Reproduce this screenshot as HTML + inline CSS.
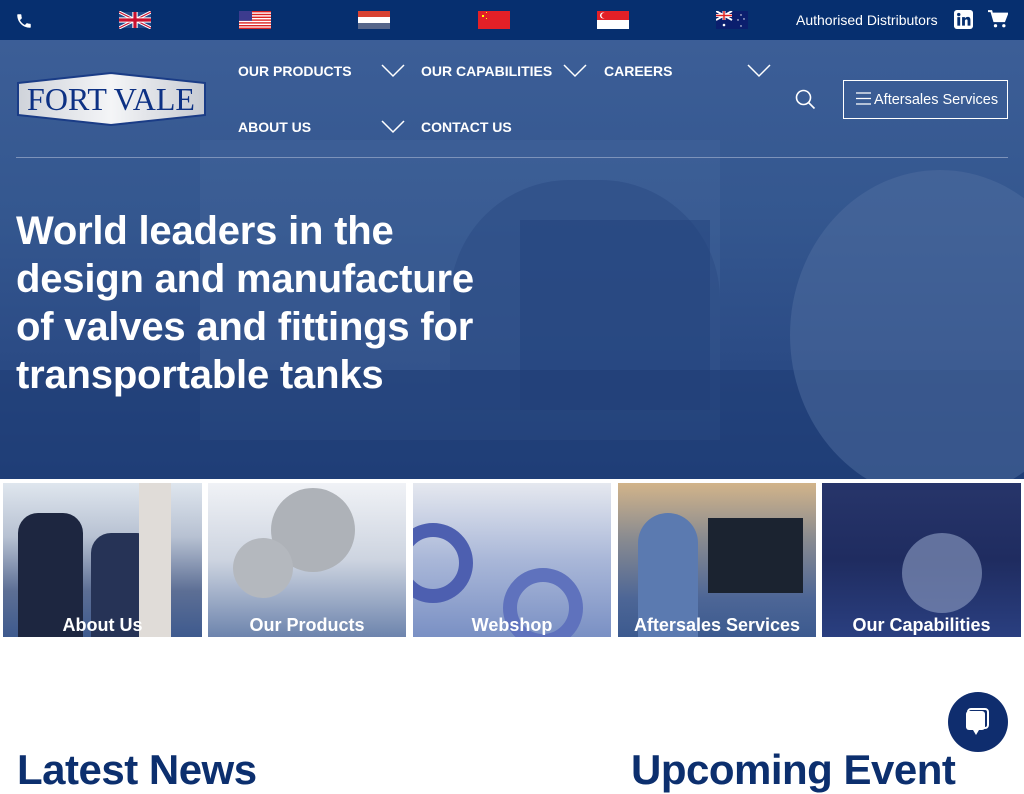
<!DOCTYPE html>
<html><head><meta charset="utf-8"><style>
*{margin:0;padding:0;box-sizing:border-box}
body{width:1024px;height:768px;overflow:hidden;background:#fff;font-family:"Liberation Sans",Arial,sans-serif;position:relative}
.top{position:absolute;left:0;top:0;width:1024px;height:40px;background:#062f6f}
.flag{position:absolute;top:11px;width:32px;height:18px}
.hero{position:absolute;left:0;top:40px;width:1024px;height:439px;background:linear-gradient(180deg,#3c5e97 0%,#34578f 40%,#2c4c86 70%,#1f3f78 100%);overflow:hidden}
.nav{position:absolute;color:#fff;font-weight:bold;font-size:14px}
.chev{position:absolute;width:24px;height:14px}
.h1{position:absolute;left:16px;top:207px;color:#fff;font-weight:bold;font-size:40px;line-height:48px;letter-spacing:-0.2px}
.tile{position:absolute;top:483px;height:154px;overflow:hidden}
.tile span{position:absolute;left:0;right:0;bottom:1px;text-align:center;color:#fff;font-weight:bold;font-size:18px}
.hd{position:absolute;top:741px;color:#0c2f6e;font-weight:bold;font-size:42px;letter-spacing:-0.5px}
</style></head><body>
<div class="top">
<svg style="position:absolute;left:15px;top:12px" width="18" height="18" viewBox="0 0 24 24"><path fill="#fff" d="M6.6 10.8c1.4 2.8 3.8 5.1 6.6 6.6l2.2-2.2c.3-.3.7-.4 1-.2 1.1.4 2.3.6 3.6.6.6 0 1 .4 1 1V20c0 .6-.4 1-1 1C10.6 21 3 13.4 3 4c0-.6.4-1 1-1h3.5c.6 0 1 .4 1 1 0 1.3.2 2.5.6 3.600.1.3 0 .7-.2 1z"/></svg>
<svg class="flag" style="left:119px" viewBox="0 0 60 30"><rect width="60" height="30" fill="#1f4a8a"/><path d="M0 0L60 30M60 0L0 30" stroke="#fff" stroke-width="6"/><path d="M0 0L60 30M60 0L0 30" stroke="#c8102e" stroke-width="2"/><path d="M30 0V30M0 15H60" stroke="#fff" stroke-width="10"/><path d="M30 0V30M0 15H60" stroke="#c8102e" stroke-width="6"/></svg>
<svg class="flag" style="left:239px" viewBox="0 0 32 18"><rect width="32" height="18" fill="#fff"/><g fill="#d22"><rect y="0" width="32" height="1.4"/><rect y="2.8" width="32" height="1.4"/><rect y="5.6" width="32" height="1.4"/><rect y="8.4" width="32" height="1.4"/><rect y="11.2" width="32" height="1.4"/><rect y="14" width="32" height="1.4"/><rect y="16.6" width="32" height="1.4"/></g><rect width="13" height="9.8" fill="#3c3b8e"/></svg>
<svg class="flag" style="left:358px" viewBox="0 0 32 18"><rect width="32" height="6" fill="#d84232"/><rect y="6" width="32" height="6" fill="#fff"/><rect y="12" width="32" height="6" fill="#56668a"/></svg>
<svg class="flag" style="left:478px" viewBox="0 0 32 18"><rect width="32" height="18" fill="#e32027"/><rect x="4" y="4" width="2" height="2" fill="#ff0"/><rect x="8" y="1" width="1" height="1" fill="#ff0"/><rect x="8" y="7" width="1" height="1" fill="#ff0"/></svg>
<svg class="flag" style="left:597px" viewBox="0 0 32 18"><rect width="32" height="9" fill="#e32027"/><rect y="9" width="32" height="9" fill="#fff"/><circle cx="6" cy="4.5" r="3" fill="#fff"/><circle cx="7" cy="4.5" r="2.6" fill="#e32027"/></svg>
<svg class="flag" style="left:716px" viewBox="0 0 32 18"><rect width="32" height="18" fill="#0b1f6e"/><path d="M0 0L16 9M16 0L0 9" stroke="#fff" stroke-width="2"/><path d="M8 0V9M0 4.5H16" stroke="#fff" stroke-width="3"/><path d="M8 0V9M0 4.5H16" stroke="#d22" stroke-width="1.5"/><circle cx="8" cy="14" r="1.3" fill="#fff"/><circle cx="25" cy="4" r=".7" fill="#fff"/><circle cx="22" cy="9" r=".7" fill="#fff"/><circle cx="28" cy="8" r=".7" fill="#fff"/><circle cx="25" cy="15" r=".7" fill="#fff"/></svg>
<div style="position:absolute;left:796px;top:12px;color:#fff;font-size:14px">Authorised Distributors</div>
<svg style="position:absolute;left:954px;top:10px" width="19" height="19" viewBox="0 0 20 20"><rect width="20" height="20" rx="3" fill="#fff"/><rect x="3.5" y="7.5" width="3" height="9" fill="#062f6f"/><circle cx="5" cy="4.8" r="1.8" fill="#062f6f"/><path d="M8.5 7.5h3v1.4c.6-1 1.7-1.6 3-1.6 2.2 0 2.8 1.4 2.8 3.5v5.7h-3v-5c0-1-.3-1.6-1.2-1.6-1 0-1.6.7-1.6 1.8v4.8h-3z" fill="#062f6f"/></svg>
<svg style="position:absolute;left:988px;top:10px" width="20" height="19" viewBox="0 0 24 22"><path d="M0 1h4l3.5 12h12L23 4H6" fill="none" stroke="#fff" stroke-width="2.4"/><path d="M6 4h17l-3 9H8z" fill="#fff"/><circle cx="9" cy="18.5" r="2" fill="#fff"/><circle cx="19" cy="18.5" r="2" fill="#fff"/></svg>
</div>
<div class="hero">
<div style="position:absolute;left:200px;top:100px;width:520px;height:300px;background:#4a6aa0;opacity:.3"></div>
<div style="position:absolute;left:450px;top:140px;width:270px;height:230px;border-radius:120px 120px 0 0;background:#2d4d86;opacity:.6"></div>
<div style="position:absolute;left:520px;top:180px;width:190px;height:190px;background:#22427c;opacity:.5"></div>
<div style="position:absolute;left:0;top:330px;width:1024px;height:110px;background:#1f3e77;opacity:.6"></div>
<div style="position:absolute;left:790px;top:130px;width:300px;height:330px;border-radius:50%;background:#4f6da0;opacity:.5"></div>
<div style="position:absolute;left:16px;top:117px;width:992px;height:1px;background:#7d93ba"></div>
</div>
<svg style="position:absolute;left:16px;top:72px" width="191" height="55" viewBox="0 0 191 55"><defs><linearGradient id="g" x1="0" x2="1"><stop offset="0" stop-color="#cfd3da"/><stop offset=".5" stop-color="#f4f5f7"/><stop offset="1" stop-color="#c6cad2"/></linearGradient></defs><path d="M2 11L95 1L189 11V43L95 53L2 43Z" fill="url(#g)" stroke="#1a3c86" stroke-width="2"/><text x="95" y="38" text-anchor="middle" font-family="Liberation Serif,serif" font-size="32" fill="#0d3184">FORT VALE</text></svg>
<div class="nav" style="left:238px;top:63px">OUR PRODUCTS</div>
<div class="nav" style="left:421px;top:63px">OUR CAPABILITIES</div>
<div class="nav" style="left:604px;top:63px">CAREERS</div>
<div class="nav" style="left:238px;top:119px">ABOUT US</div>
<div class="nav" style="left:421px;top:119px">CONTACT US</div>
<svg class="chev" style="left:381px;top:64px" viewBox="0 0 24 14"><path d="M1 1l11 11L23 1" fill="none" stroke="#fff" stroke-width="1.5"/></svg>
<svg class="chev" style="left:563px;top:64px" viewBox="0 0 24 14"><path d="M1 1l11 11L23 1" fill="none" stroke="#fff" stroke-width="1.5"/></svg>
<svg class="chev" style="left:747px;top:64px" viewBox="0 0 24 14"><path d="M1 1l11 11L23 1" fill="none" stroke="#fff" stroke-width="1.5"/></svg>
<svg class="chev" style="left:381px;top:120px" viewBox="0 0 24 14"><path d="M1 1l11 11L23 1" fill="none" stroke="#fff" stroke-width="1.5"/></svg>
<svg style="position:absolute;left:795px;top:89px" width="21" height="21" viewBox="0 0 21 21"><circle cx="8.5" cy="8.5" r="7" fill="none" stroke="#fff" stroke-width="1.6"/><path d="M13.5 13.5l6 6" stroke="#fff" stroke-width="1.6"/></svg>
<div style="position:absolute;left:843px;top:80px;width:165px;height:39px;border:1px solid #fff;color:#fff;font-size:14.5px;line-height:38px;padding-left:30px">Aftersales Services</div>
<svg style="position:absolute;left:856px;top:92px" width="15" height="13" viewBox="0 0 15 13"><path d="M0 1h15M0 6.5h15M0 12h15" stroke="#fff" stroke-width="1.2"/></svg>
<div class="h1">World leaders in the<br>design and manufacture<br>of valves and fittings for<br>transportable tanks</div>
<div class="tile" style="left:3px;width:199px;background:linear-gradient(180deg,#dfe6ee 0%,#b7c1d2 35%,#5d6f95 70%,#3e5a8e 100%)"><div style="position:absolute;left:15px;top:30px;width:65px;height:124px;background:#1d2640;border-radius:20px 20px 0 0"></div><div style="position:absolute;left:88px;top:50px;width:66px;height:104px;background:#263356;border-radius:20px 20px 0 0"></div><div style="position:absolute;left:136px;top:0;width:32px;height:154px;background:#e0dcd8"></div><span>About Us</span></div>
<div class="tile" style="left:208px;width:198px;background:linear-gradient(180deg,#f0f2f6 0%,#cdd4e0 50%,#6d84ad 100%)"><div style="position:absolute;left:63px;top:5px;width:84px;height:84px;border-radius:50%;background:#aeb2b8"></div><div style="position:absolute;left:25px;top:55px;width:60px;height:60px;border-radius:50%;background:#b4b8be"></div><span>Our Products</span></div>
<div class="tile" style="left:413px;width:198px;background:linear-gradient(180deg,#e5e8ef 0%,#a9b7d8 50%,#7a90c4 100%)"><div style="position:absolute;left:-20px;top:40px;width:80px;height:80px;border-radius:50%;border:14px solid #4d5fb0"></div><div style="position:absolute;left:90px;top:85px;width:80px;height:80px;border-radius:50%;border:14px solid #5f72bd"></div><span>Webshop</span></div>
<div class="tile" style="left:618px;width:198px;background:linear-gradient(180deg,#d2b48a 0%,#8b8c90 35%,#4d6696 75%,#3c5a8f 100%)"><div style="position:absolute;left:90px;top:35px;width:95px;height:75px;background:#1b2330"></div><div style="position:absolute;left:20px;top:30px;width:60px;height:124px;background:#5b7ab0;border-radius:30px 30px 0 0"></div><span>Aftersales Services</span></div>
<div class="tile" style="left:822px;width:199px;background:linear-gradient(180deg,#27356a 0%,#1f2c60 50%,#2a3f80 100%)"><div style="position:absolute;left:80px;top:50px;width:80px;height:80px;border-radius:50%;background:#8090b8;opacity:.7"></div><span>Our Capabilities</span></div>
<div class="hd" style="left:17px;top:746px">Latest News</div>
<div class="hd" style="left:631px;top:746px">Upcoming Event</div>
<div style="position:absolute;left:948px;top:692px;width:60px;height:60px;border-radius:50%;background:#0f2d6e"></div>
<svg style="position:absolute;left:962px;top:706px" width="32" height="32" viewBox="0 0 32 32"><rect x="6" y="3" width="20" height="19" rx="3" fill="none" stroke="#fff" stroke-width="2"/><rect x="4" y="5" width="19" height="19" rx="3" fill="#fff"/><path d="M11 24l3 5 3-5z" fill="#fff"/></svg>
</body></html>
